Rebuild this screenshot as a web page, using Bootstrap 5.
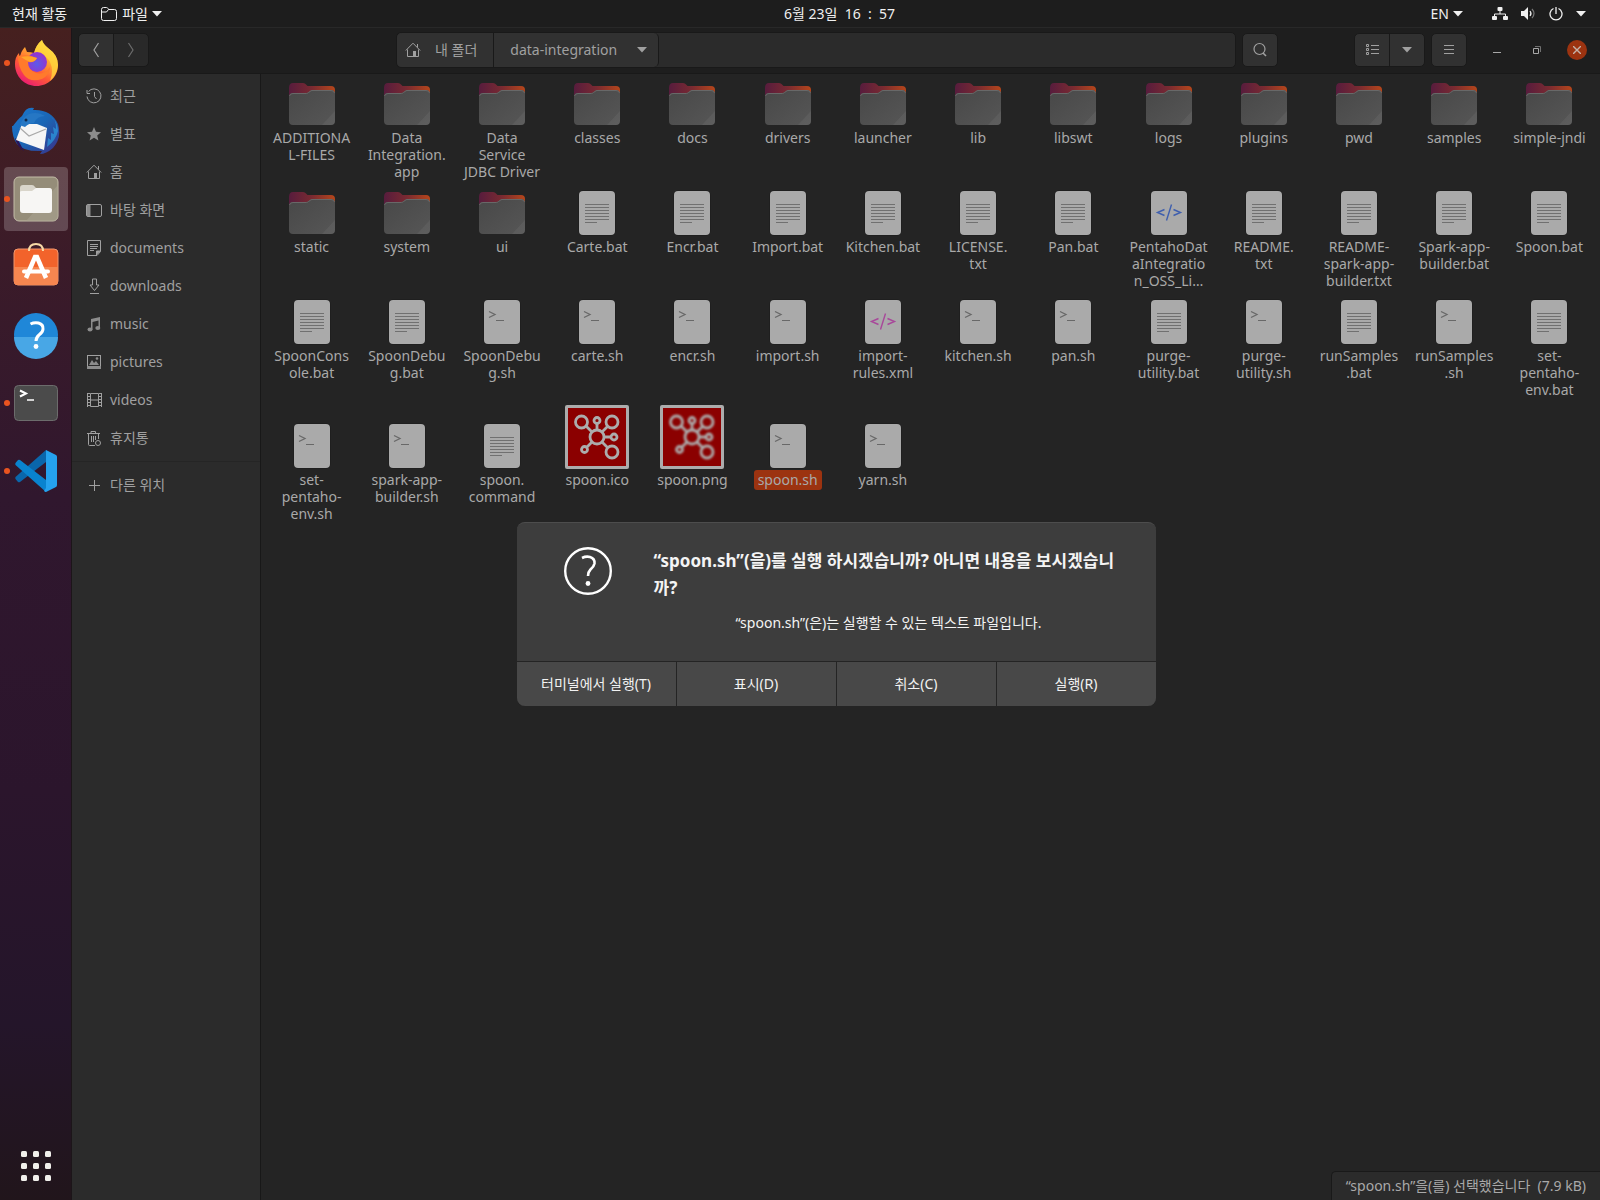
<!DOCTYPE html>
<html lang="ko">
<head>
<meta charset="utf-8">
<meta name="viewport" content="width=device-width, initial-scale=1">
<title>data-integration</title>
<link rel="stylesheet" href="https://cdn.jsdelivr.net/npm/bootstrap@5.3.0/dist/css/bootstrap.min.css">
<script src="https://cdn.jsdelivr.net/npm/bootstrap@5.3.0/dist/js/bootstrap.bundle.min.js"></script>
<style>
body{background:#242424;color:#a9a9a9;font-family:"Noto Sans","Noto Sans CJK KR",sans-serif;font-size:14px;line-height:20px}
a,button{color:inherit;text-decoration:none}
button{background:none;border:0;padding:0;font:inherit}
svg{display:block;flex:none}
.topbar{height:28px;background:#1d1d1d;border-bottom:1px solid #282828;color:#f0f0f0}
.topbar-start{width:49%;gap:33px;padding-left:12px}
.tray{gap:13px;padding-right:14px}
.dock{width:72px;flex:none;gap:4px;padding:3px 4px 17px;background:linear-gradient(180deg,#46201f 0,#3b1b29 20%,#30172e 40%,#2b152c 65%,#24152a 85%,#21151b 100%);border-right:1px solid #1c1519}
.dock-item{width:64px;height:64px;border-radius:4px}
.dock-item.is-active{background:rgba(255,255,255,.2)}
.dock-item.is-running::before{content:"";position:absolute;left:0;top:29px;width:6px;height:6px;border-radius:50%;background:#e95420}
.headerbar{height:46px;background:#1e1e1e;border-bottom:1px solid #191919;padding:0 13px 1px 6px}
.hb-btn{width:36px;height:34px;background:#313131;border:1px solid #191919;border-radius:5px;color:#a0a0a0}
.hb-btn.is-dim{background:#292929;color:#6c6c6c}
.join-start{border-top-right-radius:0;border-bottom-right-radius:0}
.join-end{border-top-left-radius:0;border-bottom-left-radius:0;margin-left:-1px}
.pathbar{height:36px;background:#2b2b2b;border:1px solid #191919;border-radius:5px;margin-left:247px;margin-right:6px}
.path-seg{height:34px;background:#313131;color:#a0a0a0;border-right:1px solid #191919}
.path-home{padding:0 16px 0 8px;gap:14px;border-radius:5px 0 0 5px}
.path-here{padding:0 11px 0 16px;gap:20px;border-radius:0 5px 5px 0}
.view-group{gap:6px}
.win-group{gap:20px}
.win-ctl{width:20px;height:20px;color:#a8a8a8}
.close-ctl{background:#9c3310;border-radius:50%}
.places{width:189px;flex:none;background:#2b2b2b;border-right:1px solid #181818;padding-top:3px;color:#a0a0a0}
.place{height:38px;padding-left:14px;gap:8px}
.place-rule{height:1px;background:#252525;margin:4px 0}
.file-grid{display:grid;grid-template-columns:repeat(14,minmax(0,1fr));gap:8px 0;padding:5px 3px;align-items:start}
.file-art{height:48px}
.tall .file-art{height:63px}
.file-name{line-height:17px;min-height:51px;margin-top:2px}
.file-name span{display:inline-block;white-space:nowrap}
.file-name .chosen{background:#9c3310;border-radius:3px;padding:1px 4px;margin-top:-1px;line-height:18px}
.status{right:0;bottom:0;height:29px;background:#2b2b2b;border:1px solid #191919;border-width:1px 0 0 1px;border-radius:5px 0 0 0;padding:4px 14px 0 14px}
.ask-layer{inset:0}
.ask{width:639px;background:#3d3d3d;border-radius:8px;color:#f4f4f4;border-top:1px solid #4d4d4d;overflow:hidden}
.ask-body{padding:24px 32px 12px 47px;gap:42px}
.ask-title{font-size:17px;line-height:27px;font-weight:700}
.ask-actions{background:#242424;gap:1px;border-top:1px solid #242424}
.ask-actions button{height:44px;background:#484848;color:#f2f2f2;flex:1 1 0}
</style>
</head>
<body>
<svg width="0" height="0" class="position-absolute" aria-hidden="true">
<defs>
<linearGradient id="gBack" x1="0" y1="0" x2="1" y2="0"><stop offset="0" stop-color="#571c3d"/><stop offset=".5" stop-color="#7a2a31"/><stop offset="1" stop-color="#b5461b"/></linearGradient>
<linearGradient id="gFront" x1="0" y1="0" x2="1" y2="1"><stop offset="0" stop-color="#484848"/><stop offset="1" stop-color="#565656"/></linearGradient>
<linearGradient id="gFox" x1=".8" y1="0" x2=".2" y2="1"><stop offset="0" stop-color="#fff44f"/><stop offset=".35" stop-color="#ffa930"/><stop offset=".65" stop-color="#ff5a36"/><stop offset="1" stop-color="#e8127c"/></linearGradient>
<radialGradient id="gGlobe" cx=".5" cy=".6"><stop offset="0" stop-color="#5b5bea"/><stop offset="1" stop-color="#9037d0"/></radialGradient>
<linearGradient id="gBird" x1="0" y1="0" x2="1" y2="1"><stop offset="0" stop-color="#1b78cf"/><stop offset=".5" stop-color="#1a66b5"/><stop offset="1" stop-color="#3d2e86"/></linearGradient>
<symbol id="folder" viewBox="0 0 48 48"><path d="M1 9q0-5 4-5h10q2 0 3 1.500L19.500 7H43q4 0 4 4v9H1z" fill="url(#gBack)"/><path d="M1 18q0-4 4-4h13q1.500 0 2.500-1l1.500-1q1-1 2.500-1H43q4 0 4 4v27q0 4-4 4H5q-4 0-4-4z" fill="url(#gFront)"/><path d="M1.500 17q.5-2.500 3.500-2.500h13.500q1 0 2-1l1.500-1q1-1 2-1h19q3 0 3.500 2.500" fill="none" stroke="#686868"/><path d="M47 32L34 46h9q4 0 4-4z" fill="#fff" opacity=".05"/></symbol>
<symbol id="sheet" viewBox="0 0 48 48"><rect x="5.500" y="2.500" width="37" height="45" rx="4.500" fill="#1b1b1b"/><rect x="6" y="3" width="36" height="44" rx="4" fill="#aaa"/></symbol>
<symbol id="text" viewBox="0 0 48 48"><use href="#sheet"/><path d="M12 16.500h24M12 19.500h24M12 22.500h24M12 25.500h24M12 28.500h24M12 31.500h24M12 34.500h12" stroke="#707070"/></symbol>
<symbol id="script" viewBox="0 0 48 48"><use href="#sheet"/><path d="M11 14.500l6 3-6 3" fill="none" stroke="#686868" stroke-width="1.300"/><path d="M18 23.500h8" stroke="#686868"/></symbol>
<symbol id="tag" viewBox="0 0 48 48"><use href="#sheet"/><path d="M19.500 21.500L12.500 24.500l7 3M28.500 21.500l7 3-7 3M26.500 16.500l-5 16" fill="none" stroke="currentColor" stroke-width="1.400"/></symbol>
<symbol id="net" viewBox="0 0 64 64"><g fill="none" stroke="#acacac" stroke-width="2.800"><circle cx="32" cy="32" r="7"/><circle cx="16.500" cy="17" r="6"/><circle cx="47" cy="17" r="6"/><circle cx="47" cy="47" r="6"/><circle cx="32" cy="15.500" r="3"/><circle cx="49" cy="32" r="3"/><circle cx="19.500" cy="44.500" r="3"/><path d="M21 21l6 6M42.500 21.500L37 27M42.500 42.500L37 37M32 18.500V25M39 32h7M22 42l5-5"/></g></symbol>
<symbol id="home" viewBox="0 0 16 16"><path d="M.8 8.500L8 1.200l7.200 7.300M2.500 7.500v7h11v-7M12.500 2v3.500" fill="none" stroke="currentColor"/><path d="M8 9h3v6H8z" fill="currentColor"/></symbol>
<symbol id="down" viewBox="0 0 10 6"><path d="M0 0h10L5 5.500z" fill="currentColor"/></symbol>
</defs>
</svg>

<div class="d-flex flex-column min-vh-100">
<header class="topbar d-flex align-items-center">
  <div class="topbar-start d-flex align-items-center">
    <button type="button">현재 활동</button>
    <button type="button" class="d-flex align-items-center gap-1">
      <svg width="18" height="16" viewBox="0 0 18 16"><path d="M1.500 3.500q0-2 2-2h3q1 0 1.500 1l.5 1h6q2 0 2 2v7q0 2-2 2h-11q-2 0-2-2zM1.500 6h5l2-2.500" fill="none" stroke="currentColor"/></svg>
      <span>파일</span><svg width="10" height="6"><use href="#down"/></svg>
    </button>
  </div>
  <time>6월 23일 &nbsp;16&nbsp; :&nbsp; 57</time>
  <div class="tray d-flex align-items-center ms-auto">
    <button type="button" class="d-flex align-items-center gap-1 me-3">EN <svg width="10" height="6"><use href="#down"/></svg></button>
    <svg width="16" height="16" viewBox="0 0 16 16" fill="currentColor"><rect x="5.500" y="1" width="5" height="4" rx="1"/><rect x="0" y="10" width="5" height="4" rx="1"/><rect x="11" y="10" width="5" height="4" rx="1"/><path d="M8 4v4M2.500 11V8h11v3" fill="none" stroke="currentColor"/></svg>
    <svg width="15" height="16" viewBox="0 0 15 16"><path d="M0 5h3l4-4v13l-4-4H0z" fill="currentColor"/><path d="M9 5q2 2.500 0 5" fill="none" stroke="currentColor" stroke-width="1.200"/><path d="M11 3q4 4.500 0 9" fill="none" stroke="#777" stroke-width="1.200"/></svg>
    <svg width="14" height="16" viewBox="0 0 14 16"><path d="M4.500 2.500a6 6 0 1 0 5 0M7 1v7" fill="none" stroke="currentColor" stroke-width="1.300"/></svg>
    <svg width="10" height="6"><use href="#down"/></svg>
  </div>
</header>

<div class="d-flex flex-grow-1">
<nav class="dock d-flex flex-column" aria-label="Dock">
  <a href="#" aria-label="Firefox" class="dock-item is-running position-relative d-flex align-items-center justify-content-center">
    <svg width="48" height="48" viewBox="0 0 48 48"><path d="M3 25q0-7 4-11 0 3 1 4 1-6 5-10l2 5q4 0 7 1 2-8 8-13 1 4 6 8 10 7 10 17c0 12-10 21-21.500 21S3 38 3 25z" fill="url(#gFox)"/><path d="M30 1q1 4 6 8 10 7 10 17-1 10-8 16 4-10 0-19-4-7-11-8-4-1-5-1 2-8 8-13z" fill="#ffd83d" opacity=".75"/><circle cx="25" cy="23" r="10" fill="url(#gGlobe)"/><path d="M6 17q8-3 19 2-2 5-9 4 0 8 8 11 9 2 14-6 0 8-8 12-12 4-18-4Q6 28 6 17z" fill="#ff7a2c"/><path d="M9 18q8-2 16 1-2 4-7 4-5-2-9-5z" fill="#ffa52a"/></svg></a>
  <a href="#" aria-label="Thunderbird" class="dock-item d-flex align-items-center justify-content-center">
    <svg width="48" height="48" viewBox="0 0 48 48"><path d="M1 19Q6 12 10 9q4-10 12-8l-1 2Q39 2 46 17q4 14-5 24-7 6-13 6l2-3Q12 45 5 37 0 30 0 19z" fill="url(#gBird)"/><path d="M3 31q2 9 9 13L6 33z" fill="#2a1558"/><path d="M36 8q9 4 8 14l-3-2 1 7-3-1 0 7-3-2-1 9q9-7 11-16 0-11-10-16z" fill="#2b9be0" opacity=".7"/><path d="M10 17l-6 16 28 10 3-22-10-4z" fill="#f6f6f6"/><path d="M8 21l9 8 17-7" fill="none" stroke="#a9a9a9" stroke-width="1.200"/><path d="M8 18q3-8 9-11 9-3 16 2-8 0-11 7-5 0-9 4l-3-1z" fill="#2677c4"/><circle cx="14" cy="13" r="1.500" fill="#10294c"/></svg></a>
  <a href="#" aria-label="파일" class="dock-item is-active is-running position-relative d-flex align-items-center justify-content-center">
    <svg width="48" height="48" viewBox="0 0 48 48"><rect x="2" y="2" width="44" height="44" rx="5" fill="#958d79" stroke="#c4bda8"/><path d="M46 10v30q0 6-6 6H14z" fill="#a9a28f" opacity=".6"/><path d="M8 13q0-3 3-3h9q2 0 3 2l1 1h13q3 0 3 3v9H8z" fill="#d9d5ca"/><path d="M8 17q0-1 2-1h10l4-3h13q3 0 3 3v19q0 3-3 3H11q-3 0-3-3z" fill="#f7f6f4"/></svg></a>
  <a href="#" aria-label="Software" class="dock-item d-flex align-items-center justify-content-center">
    <svg width="48" height="48" viewBox="0 0 48 48"><rect x="2" y="6" width="44" height="36" rx="4" fill="#f2632b" stroke="#f0976e"/><path d="M2 24h44v14q0 4-4 4H6q-4 0-4-4z" fill="#f68650"/><path d="M17 8q0-7 7-7t7 7" fill="none" stroke="#f7d9a6" stroke-width="2"/><path d="M14 35l9-21h2l9 21" fill="none" stroke="#fff" stroke-width="4.500"/><path d="M12 28.500h24" stroke="#fff" stroke-width="4" stroke-linecap="round"/></svg></a>
  <a href="#" aria-label="도움말" class="dock-item d-flex align-items-center justify-content-center">
    <svg width="48" height="48" viewBox="0 0 48 48"><circle cx="24" cy="24" r="22" fill="#1f87d8"/><path d="M2 26a22 22 0 0 0 44 0z" fill="#48a7e6"/><path d="M18.500 13q4-2 8-1 5 1.500 4.500 6 0 3-4 6-3 2.500-3 6" fill="none" stroke="#fff" stroke-width="3"/><circle cx="24" cy="35.500" r="2.400" fill="#fff"/></svg></a>
  <a href="#" aria-label="터미널" class="dock-item is-running position-relative d-flex align-items-center justify-content-center">
    <svg width="48" height="48" viewBox="0 0 48 48"><rect x="2.500" y="6.500" width="43" height="35" rx="4" fill="#4b4b4b" stroke="#6c6c6c"/><path d="M8 11.500l6 3-6 3" fill="none" stroke="#fff" stroke-width="2"/><path d="M15 21h7" stroke="#fff" stroke-width="1.500"/></svg></a>
  <a href="#" aria-label="Visual Studio Code" class="dock-item is-running position-relative d-flex align-items-center justify-content-center">
    <svg width="48" height="48" viewBox="0 0 48 48"><path d="M34 3v12L8 35q-1 .5-2 0l-2.500-3q-.5-1 0-2z" fill="#0a66ab"/><path d="M34 45V33L8 13q-1-.5-2 0l-2.500 3q-.5 1 0 2z" fill="#0983cf"/><path d="M34 3l10 5q1 .5 1 2v28q0 1.500-1 2l-10 5q-1 0-2-1l2-3z" fill="#25a2ee"/></svg></a>
  <a href="#" aria-label="모든 앱" class="mt-auto d-flex justify-content-center">
    <svg width="32" height="34" viewBox="0 0 32 34" fill="#f0efeb"><g id="dotrow"><rect x="1" y="2" width="6" height="6" rx="1.500"/><rect x="13" y="2" width="6" height="6" rx="1.500"/><rect x="25" y="2" width="6" height="6" rx="1.500"/></g><use href="#dotrow" y="12"/><use href="#dotrow" y="24"/></svg></a>
</nav>

<div class="d-flex flex-column flex-grow-1 position-relative">
  <div class="headerbar d-flex align-items-center">
    <button type="button" aria-label="뒤로" class="hb-btn join-start d-flex align-items-center justify-content-center"><svg width="8" height="16" viewBox="0 0 8 16"><path d="M6.500 1L2 8l4.500 7" fill="none" stroke="currentColor" stroke-width="1.200"/></svg></button>
    <button type="button" aria-label="앞으로" class="hb-btn join-end is-dim d-flex align-items-center justify-content-center"><svg width="8" height="16" viewBox="0 0 8 16"><path d="M1.500 1L6 8l-4.500 7" fill="none" stroke="currentColor" stroke-width="1.200"/></svg></button>
    <div class="pathbar d-flex flex-grow-1">
      <button type="button" class="path-seg path-home d-flex align-items-center"><svg width="16" height="16"><use href="#home"/></svg>내 폴더</button>
      <button type="button" class="path-seg path-here d-flex align-items-center">data-integration<svg width="10" height="6"><use href="#down"/></svg></button>
    </div>
    <button type="button" aria-label="검색" class="hb-btn d-flex align-items-center justify-content-center"><svg width="16" height="16" viewBox="0 0 16 16"><circle cx="7.500" cy="7" r="5.500" fill="none" stroke="currentColor" stroke-width="1.200"/><path d="M11 11l3 3" stroke="currentColor" stroke-width="1.600"/></svg></button>
    <div class="view-group d-flex align-items-center ms-5 ps-4">
      <div class="d-flex ms-1">
        <button type="button" aria-label="목록 보기" class="hb-btn join-start d-flex align-items-center justify-content-center"><svg width="14" height="12" viewBox="0 0 14 12" fill="none" stroke="currentColor"><path d="M1.500.5h2v2h-2zM1.500 4.500h2v2h-2zM1.500 8.500h2v2h-2zM6 1.500h8M6 5.500h8M6 9.500h8"/></svg></button>
        <button type="button" aria-label="보기 옵션" class="hb-btn join-end d-flex align-items-center justify-content-center"><svg width="10" height="6"><use href="#down"/></svg></button>
      </div>
      <button type="button" aria-label="메뉴" class="hb-btn d-flex align-items-center justify-content-center"><svg width="12" height="10" viewBox="0 0 12 10" stroke="currentColor"><path d="M1 .5h10M1 4.500h10M1 8.500h10"/></svg></button>
    </div>
    <div class="win-group d-flex ms-3 ps-1">
      <button type="button" aria-label="최소화" class="win-ctl d-flex align-items-center justify-content-center"><svg width="8" height="8"><path d="M0 6.500h8" stroke="currentColor"/></svg></button>
      <button type="button" aria-label="복원" class="win-ctl d-flex align-items-center justify-content-center"><svg width="8" height="8" fill="none"><path d="M.5 2.500h5v5h-5z" stroke="currentColor"/><path d="M2 .5h5.500V6" stroke="#707070"/></svg></button>
      <button type="button" aria-label="닫기" class="win-ctl close-ctl d-flex align-items-center justify-content-center"><svg width="8" height="8"><path d="M0 0l8 8M8 0L0 8" stroke="#c4b2a9" stroke-width="1.400"/></svg></button>
    </div>
  </div>

  <div class="d-flex flex-grow-1">
    <nav class="places d-flex flex-column" aria-label="위치">
      <a href="#" class="place d-flex align-items-center"><svg width="16" height="16" viewBox="0 0 16 16" fill="none" stroke="currentColor"><path d="M2.500 3.500a7 7 0 1 1-1.500 5M1 2v3.500h3M8.500 4v4.500l2 2.500"/></svg>최근</a>
      <a href="#" class="place d-flex align-items-center"><svg width="16" height="16" viewBox="0 0 16 16"><path d="M8 1l2 4.800 5 .4-3.800 3.300 1.200 5L8 11.800 3.600 14.500l1.200-5L1 6.200l5-.4z" fill="#8c8c8c"/></svg>별표</a>
      <a href="#" class="place d-flex align-items-center"><svg width="16" height="16"><use href="#home"/></svg>홈</a>
      <a href="#" class="place d-flex align-items-center"><svg width="16" height="16" viewBox="0 0 16 16"><rect x=".5" y="2.500" width="15" height="12" rx="1.500" fill="none" stroke="currentColor"/><path d="M1 3h3.500v11H1z" fill="#8c8c8c"/></svg>바탕 화면</a>
      <a href="#" class="place d-flex align-items-center"><svg width="16" height="16" viewBox="0 0 16 16" fill="none" stroke="currentColor"><path d="M1.500.500h13v11l-3.500 4H1.500zM4 4.500h8M4 6.500h8M4 8.500h7M4 10.500h4"/><path d="M10.500 15v-4h4" fill="currentColor"/></svg>documents</a>
      <a href="#" class="place d-flex align-items-center"><svg width="16" height="16" viewBox="0 0 16 16" fill="none" stroke="currentColor"><path d="M6.500 1v6h-2.500l4.500 5.500L13 7h-2.500V1zM4 15.500h9"/></svg>downloads</a>
      <a href="#" class="place d-flex align-items-center"><svg width="16" height="16" viewBox="0 0 16 16" fill="#8c8c8c"><path d="M5 3l9-2v11h-1.500V4.500L6.500 6v7.500H5z"/><ellipse cx="4" cy="13.500" rx="2.500" ry="2"/><ellipse cx="11.800" cy="12" rx="2.500" ry="2"/></svg>music</a>
      <a href="#" class="place d-flex align-items-center"><svg width="16" height="16" viewBox="0 0 16 16"><rect x="1.500" y="1.500" width="13" height="13" fill="none" stroke="currentColor"/><path d="M1 12h14v3H1zM3 11l3-5 2 3 2-2 3 4z" fill="#8c8c8c"/><circle cx="11" cy="4.500" r="1.300" fill="#8c8c8c"/></svg>pictures</a>
      <a href="#" class="place d-flex align-items-center"><svg width="16" height="16" viewBox="0 0 16 16" fill="none" stroke="currentColor"><path d="M4.500 1.500h8v13h-8zM4.500 8h8M1.500 1v14M15.500 1v14"/><path d="M3 1v14M14 1v14" stroke-width="2" stroke-dasharray="1 2"/></svg>videos</a>
      <a href="#" class="place d-flex align-items-center"><svg width="16" height="16" viewBox="0 0 16 16" fill="none" stroke="currentColor"><path d="M1 3.500h13M5 3V1.500h4.500V3M2.500 4v10.500q0 1 1 1H9M12.500 4v5M5.500 6v6M7.500 6v6M9.500 6v4"/><circle cx="12" cy="13" r="2.500"/></svg>휴지통</a>
      <div class="place-rule"></div>
      <a href="#" class="place d-flex align-items-center"><svg width="16" height="16" viewBox="0 0 16 16"><path d="M3 8.500h11M8.500 3v11" stroke="currentColor"/></svg>다른 위치</a>
    </nav>
    <main class="flex-grow-1">
      <div class="file-grid" id="files"></div>
    </main>
  </div>

  <div class="status position-absolute">“spoon.sh”을(를) 선택했습니다 &nbsp;(7.9 kB)</div>

  <div class="ask-layer position-absolute d-flex align-items-center justify-content-center">
    <div class="ask" role="dialog" aria-labelledby="askTitle">
      <div class="ask-body d-flex align-items-start">
        <svg width="48" height="48" viewBox="0 0 48 48"><circle cx="24" cy="24" r="22.800" fill="none" stroke="#fff" stroke-width="2.400"/><path d="M18 11q4-2 8-1 5 1.500 4.500 6.500-.5 3-4 6-2.500 2.500-2.500 6.500" fill="none" stroke="#fff" stroke-width="2.600"/><circle cx="24" cy="36.500" r="2.400" fill="#fff"/></svg>
        <div class="flex-grow-1">
          <div class="ask-title" id="askTitle">“spoon.sh”(을)를 실행 하시겠습니까? 아니면 내용을 보시겠습니<br>까?</div>
          <div class="text-center pt-2 mt-1 pb-3">“spoon.sh”(은)는 실행할 수 있는 텍스트 파일입니다.</div>
        </div>
      </div>
      <div class="ask-actions d-flex">
        <button type="button">터미널에서 실행(T)</button>
        <button type="button">표시(D)</button>
        <button type="button">취소(C)</button>
        <button type="button">실행(R)</button>
      </div>
    </div>
  </div>
</div>
</div>
</div>

<script>
// Each row is a list of [kind, label]; "|" marks a line break in the label.
const rows = [
  [['folder','ADDITIONA|L-FILES'],['folder','Data|Integration.|app'],['folder','Data|Service|JDBC Driver'],['folder','classes'],['folder','docs'],['folder','drivers'],['folder','launcher'],['folder','lib'],['folder','libswt'],['folder','logs'],['folder','plugins'],['folder','pwd'],['folder','samples'],['folder','simple-jndi']],
  [['folder','static'],['folder','system'],['folder','ui'],['text','Carte.bat'],['text','Encr.bat'],['text','Import.bat'],['text','Kitchen.bat'],['text','LICENSE.|txt'],['text','Pan.bat'],['html','PentahoDat|aIntegratio|n_OSS_Li…'],['text','README.|txt'],['text','README-|spark-app-|builder.txt'],['text','Spark-app-|builder.bat'],['text','Spoon.bat']],
  [['text','SpoonCons|ole.bat'],['text','SpoonDebu|g.bat'],['script','SpoonDebu|g.sh'],['script','carte.sh'],['script','encr.sh'],['script','import.sh'],['xml','import-|rules.xml'],['script','kitchen.sh'],['script','pan.sh'],['text','purge-|utility.bat'],['script','purge-|utility.sh'],['text','runSamples|.bat'],['script','runSamples|.sh'],['text','set-|pentaho-|env.bat']],
  [['script','set-|pentaho-|env.sh'],['script','spark-app-|builder.sh'],['text','spoon.|command'],['ico','spoon.ico'],['png','spoon.png'],['script','spoon.sh'],['script','yarn.sh']]
];
const glyph = id => `<svg width="48" height="48"><use href="#${id}"/></svg>`;
const thumb = soft => `<svg width="64" height="64" viewBox="0 0 64 64"><rect width="64" height="64" rx="2" fill="#acacac"/><rect x="3" y="3" width="58" height="58" fill="#8b0000"/><use href="#net"${soft ? ' style="filter:blur(1px)"' : ''}/></svg>`;
const art = {
  folder: glyph('folder'), text: glyph('text'), script: glyph('script'),
  html: `<span style="color:#3f5fae">${glyph('tag')}</span>`,
  xml: `<span style="color:#a8489a">${glyph('tag')}</span>`,
  ico: thumb(false), png: thumb(true)
};
document.getElementById('files').innerHTML = rows.map((row, r) => row.map(([kind, name]) =>
  `<a href="#" class="text-center${r === 3 ? ' tall' : ''}"><div class="file-art d-flex align-items-end justify-content-center">${art[kind]}</div><div class="file-name"><span${name === 'spoon.sh' ? ' class="chosen"' : ''}>${name.split('|').join('<br>')}</span></div></a>`
).join('')).join('');
</script>
</body>
</html>
